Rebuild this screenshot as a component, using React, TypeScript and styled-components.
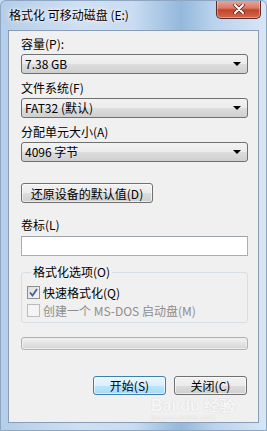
import styled, { createGlobalStyle } from "styled-components";

const GlobalStyle = createGlobalStyle`
  html, body {
    margin: 0;
    padding: 0;
    background: #c4d9ef;
  }
  * {
    box-sizing: border-box;
  }
`;

const Window = styled.div`
  position: relative;
  width: 267px;
  height: 431px;
  padding: 0 7px 7px 7px;
  display: flex;
  flex-direction: column;
  font-family: "Noto Sans CJK SC", "Liberation Sans", sans-serif;
  font-size: 12px;
  color: #000;
  background: linear-gradient(90deg, #b4cde8 0%, #cfe0f3 30%, #c9dcf1 50%, #94b8dc 68%, #b9d2ec 80%, #d7e6f5 100%);
  border: 1px solid #8ea6c2;
  border-radius: 6px 6px 0 0;
  overflow: hidden;
`;

const TitleBar = styled.div`
  height: 29px;
  display: flex;
  align-items: flex-start;
  justify-content: space-between;
`;

const Title = styled.div`
  padding-top: 6px;
  padding-left: 1px;
  font-size: 12px;
  line-height: 16px;
  color: #000;
  text-shadow: 0 0 6px #ffffff, 0 0 3px #ffffff;
`;

const CloseButton = styled.div`
  width: 45px;
  height: 19px;
  margin-right: -2px;
  margin-top: -1px;
  display: flex;
  align-items: center;
  justify-content: center;
  border: 1px solid #5b2a2a;
  border-top: none;
  border-radius: 0 0 5px 5px;
  background: linear-gradient(180deg, #e9a99a 0%, #d77a68 45%, #c3442b 55%, #cf6a4f 100%);
  box-shadow: inset 0 0 0 1px rgba(255, 255, 255, 0.35);
`;

const Client = styled.div`
  flex: 1;
  border: 1px solid #8a9db4;
  background: #f0f0f0;
  padding: 6px 10px 0 12px;
  display: flex;
  flex-direction: column;
`;

const Label = styled.div<{ $top?: number }>`
  height: 14px;
  line-height: 14px;
  margin-top: ${(p) => p.$top ?? 7}px;
  white-space: nowrap;
`;

const Combo = styled.div`
  margin-top: 3px;
  height: 20px;
  border: 1px solid #707070;
  border-radius: 3px;
  background: linear-gradient(180deg, #f2f2f2 0%, #ebebeb 50%, #dddddd 51%, #cfcfcf 100%);
  display: flex;
  align-items: center;
  justify-content: space-between;
  padding: 0 6px 0 3px;
  line-height: 18px;
`;

const Arrow = styled.div`
  width: 0;
  height: 0;
  border-left: 4px solid transparent;
  border-right: 4px solid transparent;
  border-top: 4px solid #000;
`;

const PushButton = styled.div<{ $default?: boolean }>`
  height: 20px;
  padding: 0 7px;
  display: flex;
  align-items: center;
  justify-content: center;
  border: 1px solid ${(p) => (p.$default ? "#3c7fb1" : "#707070")};
  border-radius: 3px;
  background: ${(p) =>
    p.$default
      ? "linear-gradient(180deg, #eaf6fd 0%, #d9f0fc 50%, #bee6fd 51%, #a7d9f5 100%)"
      : "linear-gradient(180deg, #f2f2f2 0%, #ebebeb 50%, #dddddd 51%, #cfcfcf 100%)"};
  box-shadow: inset 0 0 0 1px rgba(255, 255, 255, 0.6);
  white-space: nowrap;
`;

const ResetButton = styled(PushButton)`
  margin-top: 21px;
  align-self: flex-start;
  width: 132px;
`;

const TextInput = styled.div`
  margin-top: 4px;
  height: 20px;
  border: 1px solid #abadb3;
  border-top-color: #9ea3ab;
  background: #fff;
`;

const Group = styled.fieldset`
  margin: 9px 0 0 0;
  padding: 4px 5px 3px 5px;
  border: 1px solid #d5dfe5;
  border-radius: 3px;
  display: flex;
  flex-direction: column;
`;

const Legend = styled.legend`
  margin-left: 4px;
  padding: 0 2px;
  height: 14px;
  line-height: 14px;
`;

const CheckRow = styled.div<{ $disabled?: boolean }>`
  height: 18px;
  display: flex;
  align-items: center;
  gap: 3px;
  color: ${(p) => (p.$disabled ? "#8d8d8d" : "#000")};
  white-space: nowrap;
`;

const Box = styled.div<{ $disabled?: boolean }>`
  width: 13px;
  height: 13px;
  border: 1px solid ${(p) => (p.$disabled ? "#bcbcbc" : "#8e8f8f")};
  background: ${(p) =>
    p.$disabled ? "#f4f4f4" : "linear-gradient(135deg, #dcdcdc 0%, #f6f6f6 100%)"};
  display: flex;
  align-items: center;
  justify-content: center;
`;

const Progress = styled.div`
  margin-top: 14px;
  height: 13px;
  border: 1px solid #b2b2b2;
  border-radius: 3px;
  background: linear-gradient(180deg, #f3f3f3 0%, #e3e3e3 50%, #d6d6d6 100%);
  box-shadow: inset 0 0 0 1px #ececec;
`;

const ButtonRow = styled.div`
  margin-top: 26px;
  display: flex;
  justify-content: flex-end;
  gap: 8px;
  padding-right: 1px;
`;

const DialogButton = styled(PushButton)`
  width: 73px;
  height: 19px;
`;

const Watermark = styled.div`
  position: absolute;
  left: 150px;
  top: 397px;
  color: rgba(255, 255, 255, 0.85);
  font-family: "Liberation Sans", sans-serif;
  font-weight: bold;
  font-size: 16px;
  line-height: 16px;
  text-shadow: 0 0 1px rgba(120, 120, 120, 0.35);
  pointer-events: none;
  white-space: nowrap;
`;

const WatermarkSub = styled.div`
  font-size: 7px;
  line-height: 8px;
  font-weight: normal;
  letter-spacing: 0.5px;
`;

function CheckMark() {
  return (
    <svg width="9" height="9" viewBox="0 0 9 9">
      <path d="M1 4.5 L3.5 7.5 L8 1" fill="none" stroke="#4a5f97" strokeWidth="1.8" />
    </svg>
  );
}

function CloseGlyph() {
  return (
    <svg width="12" height="10" viewBox="0 0 12 10">
      <path d="M2 1 L10 9 M10 1 L2 9" stroke="#5a1a12" strokeWidth="3.4" strokeLinecap="round" />
      <path d="M2 1 L10 9 M10 1 L2 9" stroke="#ffffff" strokeWidth="2" strokeLinecap="round" />
    </svg>
  );
}

export default function App() {
  return (
    <>
      <GlobalStyle />
      <Window>
        <TitleBar>
          <Title>格式化 可移动磁盘 (E:)</Title>
          <CloseButton>
            <CloseGlyph />
          </CloseButton>
        </TitleBar>
        <Client>
          <Label $top={0}>容量(P):</Label>
          <Combo>
            <span>7.38 GB</span>
            <Arrow />
          </Combo>
          <Label>文件系统(F)</Label>
          <Combo>
            <span>FAT32 (默认)</span>
            <Arrow />
          </Combo>
          <Label>分配单元大小(A)</Label>
          <Combo>
            <span>4096 字节</span>
            <Arrow />
          </Combo>
          <ResetButton>还原设备的默认值(D)</ResetButton>
          <Label $top={15}>卷标(L)</Label>
          <TextInput />
          <Group>
            <Legend>格式化选项(O)</Legend>
            <CheckRow>
              <Box>
                <CheckMark />
              </Box>
              <span>快速格式化(Q)</span>
            </CheckRow>
            <CheckRow $disabled>
              <Box $disabled />
              <span>创建一个 MS-DOS 启动盘(M)</span>
            </CheckRow>
          </Group>
          <Progress />
          <ButtonRow>
            <DialogButton $default>开始(S)</DialogButton>
            <DialogButton>关闭(C)</DialogButton>
          </ButtonRow>
        </Client>
        <Watermark>
          Bai du 经验
          <WatermarkSub>jingyan.baidu.com</WatermarkSub>
        </Watermark>
      </Window>
    </>
  );
}
